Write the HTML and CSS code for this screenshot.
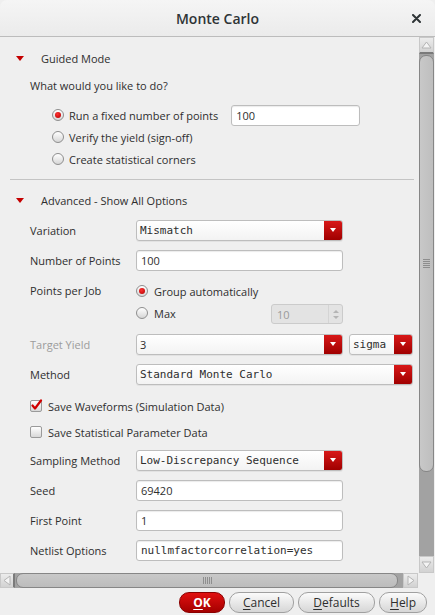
FILE: index.html
```html
<!DOCTYPE html>
<html>
<head>
<meta charset="utf-8">
<title>Monte Carlo</title>
<link rel="stylesheet" href="styles.css">
</head>
<body>
<div class="window">
  <header class="titlebar">
    <span></span>
    <span class="title">Monte Carlo</span>
    <span class="close"><svg width="9" height="9" viewBox="0 0 9 9"><path d="M1 1L8 8M8 1L1 8" stroke="#2e3436" stroke-width="2" stroke-linecap="round"/></svg></span>
  </header>
  <div class="main">
    <div class="content">
      <div class="section-head first"><svg class="tri" width="8" height="5" viewBox="0 0 8 5"><path d="M0 0H8L4 5Z" fill="#c40000"/></svg><span>Guided Mode</span></div>
      <div class="question">What would you like to do?</div>
      <div class="radio-list">
        <div class="radio-row"><span class="radio on"></span><span>Run a fixed number of points</span><div class="input fixed-input">100</div></div>
        <div class="radio-row"><span class="radio"></span><span>Verify the yield (sign-off)</span></div>
        <div class="radio-row"><span class="radio"></span><span>Create statistical corners</span></div>
      </div>
      <div class="sep"></div>
      <div class="section-head second"><svg class="tri" width="8" height="5" viewBox="0 0 8 5"><path d="M0 0H8L4 5Z" fill="#c40000"/></svg><span>Advanced - Show All Options</span></div>

      <div class="row first-row"><span class="label">Variation</span><div class="combo w207"><span class="mono">Mismatch</span><span class="drop"></span></div></div>
      <div class="row"><span class="label">Number of Points</span><div class="input w207">100</div></div>
      <div class="row ppj">
        <span class="label ppj-label">Points per Job</span>
        <div class="ppj-opts">
          <div class="opt-row"><span class="radio on"></span><span>Group automatically</span></div>
          <div class="opt-row max-row"><span class="opt-left"><span class="radio"></span><span>Max</span></span><div class="spin"><span class="spin-val">10</span><span class="spin-btns"><i class="up"></i><i class="down"></i></span></div></div>
        </div>
      </div>
      <div class="row"><span class="label dim">Target Yield</span><div class="combo w207"><span class="txt">3</span><span class="drop"></span></div><div class="combo w64"><span class="mono">sigma</span><span class="drop"></span></div></div>
      <div class="row"><span class="label">Method</span><div class="combo w277"><span class="mono">Standard Monte Carlo</span><span class="drop"></span></div></div>
      <div class="check-row first-check"><span class="check on"><svg width="13" height="12" viewBox="0 0 13 12"><path d="M2.5 6.5L5 9.5L11 1.5" fill="none" stroke="#d00000" stroke-width="2.2" stroke-linecap="round" stroke-linejoin="round"/></svg></span><span>Save Waveforms (Simulation Data)</span></div>
      <div class="check-row"><span class="check"></span><span>Save Statistical Parameter Data</span></div>
      <div class="row"><span class="label">Sampling Method</span><div class="combo w207"><span class="mono">Low-Discrepancy Sequence</span><span class="drop"></span></div></div>
      <div class="row"><span class="label">Seed</span><div class="input w207">69420</div></div>
      <div class="row"><span class="label">First Point</span><div class="input w207">1</div></div>
      <div class="row"><span class="label">Netlist Options</span><div class="input w207 mono">nullmfactorcorrelation=yes</div></div>
    </div>
    <div class="vscroll">
      <div class="sb-btn v-up"><svg width="11" height="8" viewBox="0 0 11 8"><path d="M5.5 1L10 7H1Z" fill="#f4f4f4" stroke="#b4b4b4" stroke-width="1"/></svg></div>
      <div class="v-track"><div class="v-thumb"><span class="grip-h"></span></div></div>
      <div class="sb-btn v-down"><svg width="11" height="8" viewBox="0 0 11 8"><path d="M1 1H10L5.5 7Z" fill="#f4f4f4" stroke="#b4b4b4" stroke-width="1"/></svg></div>
    </div>
  </div>
  <div class="hscroll">
    <div class="sb-btn h-left"><svg width="8" height="11" viewBox="0 0 8 11"><path d="M1 5.5L7 1V10Z" fill="#f4f4f4" stroke="#b4b4b4" stroke-width="1"/></svg></div>
    <div class="h-track"><div class="h-thumb"><span class="grip-v"></span></div></div>
    <div class="sb-btn h-right"><svg width="8" height="11" viewBox="0 0 8 11"><path d="M7 5.5L1 1V10Z" fill="#f4f4f4" stroke="#b4b4b4" stroke-width="1"/></svg></div>
    <div class="corner"></div>
  </div>
  <div class="buttons">
    <button class="btn ok"><u>O</u>K</button>
    <button class="btn cancel"><u>C</u>ancel</button>
    <button class="btn defaults"><u>D</u>efaults</button>
    <button class="btn help"><u>H</u>elp</button>
  </div>
</div>
</body>
</html>
```

FILE: styles.css
```css
* { box-sizing: border-box; }
html, body { margin: 0; padding: 0; }
body {
  width: 435px;
  height: 615px;
  overflow: hidden;
  background: #efefef;
  font-family: "Open Sans", "Noto Sans", sans-serif;
  font-size: 11px;
  color: #2e2e2e;
}
.window { display: flex; flex-direction: column; height: 615px; }

.titlebar {
  height: 37px;
  flex: none;
  border-bottom: 1px solid #bcbcbc;
  background: linear-gradient(#f5f5f5, #ebebeb);
  border-radius: 7px 7px 0 0;
  display: grid;
  grid-template-columns: 1fr auto 1fr;
  align-items: center;
}
.title { font-size: 14px; font-weight: 600; color: #2e3436; }
.close { justify-self: end; margin-right: 14px; display: flex; }

.main { display: flex; height: 536px; flex: none; }
.content { width: 419px; overflow: hidden; }

.section-head { height: 28px; display: flex; align-items: center; padding-left: 16px; }
.section-head.first { margin-top: 7px; }
.section-head.second { margin-top: 6px; }
.tri { margin-right: 17px; }
.question { padding-left: 30px; height: 20px; line-height: 20px; margin-top: 4px; }
.radio-list { margin-top: 8px; padding-left: 52px; }
.radio-row { height: 22px; display: flex; align-items: center; gap: 5px; }
.fixed-input { margin-left: 8px; width: 129px; }

.radio {
  width: 12px; height: 12px; border-radius: 50%;
  border: 1px solid #8e8e8e;
  background: linear-gradient(#ffffff, #d6d6d6);
  display: flex; align-items: center; justify-content: center;
  flex: none;
}
.radio.on::after {
  content: ""; width: 6px; height: 6px; border-radius: 50%;
  background: radial-gradient(circle at 40% 35%, #ff3030, #b00000);
}

.sep { margin: 9px 5px 0 10px; height: 1px; background: #c4c4c4; }

.row { height: 30px; display: flex; align-items: center; padding-left: 30px; gap: 6px; }
.row.first-row { margin-top: 1px; }
.label { width: 100px; flex: none; }
.label.dim { color: #9c9c9c; }

.input, .combo {
  height: 21px;
  border: 1px solid #bdbdbd;
  border-radius: 3px;
  background: #ffffff;
  box-shadow: inset 0 1px 1px rgba(0,0,0,0.08);
  display: flex; align-items: center;
  padding-left: 4px;
  flex: none;
}
.combo { background: linear-gradient(#ffffff, #f3f3f3); box-shadow: 0 1px 0 rgba(0,0,0,0.05); padding-left: 3px; }
.w207 { width: 207px; }
.w64 { width: 64px; }
.w277 { width: 277px; }
.mono { font-family: "DejaVu Sans Mono", monospace; font-size: 11px; }
.combo .txt { flex: 1; }
.combo .mono { flex: 1; }
.drop {
  width: 18px; height: 19px; flex: none;
  border-radius: 0 2px 2px 0;
  background: linear-gradient(#d81818, #a00000);
  display: flex; align-items: center; justify-content: center;
}
.drop::after {
  content: ""; width: 0; height: 0;
  border-left: 3.5px solid transparent;
  border-right: 3.5px solid transparent;
  border-top: 4px solid #ffffff;
}

.row.ppj { height: 54px; align-items: flex-start; padding-top: 5px; }
.ppj-label { line-height: 22px; }
.ppj-opts { width: 207px; display: flex; flex-direction: column; }
.opt-row { height: 22px; display: flex; align-items: center; gap: 6px; }
.max-row { justify-content: space-between; }
.opt-left { display: flex; align-items: center; gap: 6px; }
.spin {
  width: 72px; height: 20px; margin-top: 2px;
  border: 1px solid #cbcbcb; border-radius: 3px;
  background: #e3e3e3;
  display: flex; align-items: stretch;
}
.spin-val { flex: 1; color: #9a9a9a; padding-left: 5px; display: flex; align-items: center; }
.spin-btns { width: 14px; display: flex; flex-direction: column; justify-content: center; align-items: center; gap: 3px; border-left: 1px solid #d4d4d4; }
.spin-btns i { width: 0; height: 0; border-left: 3px solid transparent; border-right: 3px solid transparent; }
.spin-btns .up { border-bottom: 3px solid #b4b4b4; }
.spin-btns .down { border-top: 3px solid #b4b4b4; }

.check-row { height: 26px; display: flex; align-items: center; padding-left: 30px; gap: 6px; }
.check-row.first-check { margin-top: 4px; }
.check {
  width: 12px; height: 12px; flex: none;
  border: 1px solid #9a9a9a; border-radius: 2px;
  background: linear-gradient(#ffffff, #d8d8d8);
  position: relative;
}
.check svg { position: absolute; left: -1px; top: -2px; }

.vscroll { width: 15px; margin-right: 1px; display: flex; flex-direction: column; }
.sb-btn {
  background: linear-gradient(#ececec, #d2d2d2);
  border: 1px solid #c8c8c8;
  display: flex; align-items: center; justify-content: center;
  flex: none;
}
.v-up { height: 17px; border-bottom: 2px solid #7a7a7a; }
.v-down { height: 17px; }
.v-track { flex: 1; background: #a2a2a2; padding: 1px 0; }
.v-thumb {
  height: 417px;
  border: 1px solid #868686;
  border-radius: 7px;
  background: linear-gradient(90deg, #c8c8c8, #bebebe);
  display: flex; align-items: center; justify-content: center;
}
.grip-h { width: 7px; height: 9px; background: repeating-linear-gradient(#8e8e8e 0 1px, transparent 1px 2px); }

.hscroll { height: 15px; display: flex; flex: none; }
.h-left { width: 15px; border-right: 2px solid #7a7a7a; }
.h-right { width: 15px; }
.h-track { flex: 1; background: #a2a2a2; padding: 0 5px 0 1px; display: flex; }
.h-thumb {
  flex: 1;
  border: 1px solid #868686;
  border-radius: 7px;
  background: linear-gradient(#c8c8c8, #bcbcbc);
  display: flex; align-items: center; justify-content: center;
}
.grip-v { width: 9px; height: 7px; background: repeating-linear-gradient(90deg, #8e8e8e 0 1px, transparent 1px 2px); }
.corner { width: 17px; background: #efefef; }

.buttons { height: 27px; flex: none; display: flex; justify-content: flex-end; align-items: center; gap: 4px; padding-right: 8px; padding-top: 2px; }
.btn {
  height: 21px; border-radius: 10px;
  border: 1px solid #a0a0a0;
  background: linear-gradient(#fbfbfb, #d6d6d6);
  font-family: "Open Sans", "Noto Sans", sans-serif;
  font-size: 12px; color: #2e2e2e;
  display: flex; align-items: center; justify-content: center;
  padding: 0;
}
.btn u { text-decoration-thickness: 1px; text-underline-offset: 2px; }
.ok { width: 46px; background: linear-gradient(#e01010, #a40000); border-color: #8a0000; color: #ffffff; font-weight: 700; }
.cancel { width: 65px; }
.defaults { width: 77px; }
.help { width: 48px; }
```
